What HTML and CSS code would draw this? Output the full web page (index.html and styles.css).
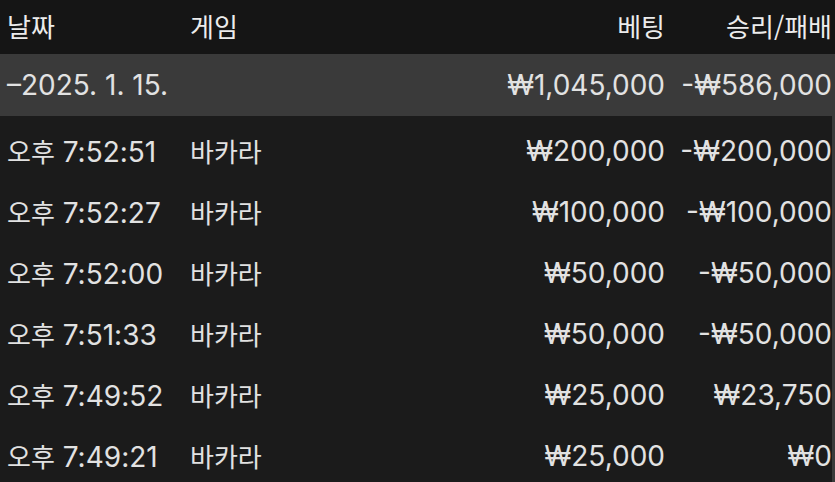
FILE: index.html
```html
<!DOCTYPE html>
<html lang="ko">
<head>
<meta charset="utf-8">
<link rel="stylesheet" href="styles.css">
</head>
<body>
<div class="table">
  <div class="row head">
    <div class="c date"><span class="ko">날짜</span></div>
    <div class="c game"><span class="ko">게임</span></div>
    <div class="c num"><span class="ko">베팅</span></div>
    <div class="c num"><span class="ko">승리/패배</span></div>
  </div>
  <div class="body">
    <div class="row group">
      <div class="c date">–2025. 1. 15.</div>
      <div class="c game"></div>
      <div class="c num">₩1,045,000</div>
      <div class="c num">-₩586,000</div>
    </div>
    <div class="row">
      <div class="c date"><span class="ko">오후</span> 7:52:51</div>
      <div class="c game"><span class="ko">바카라</span></div>
      <div class="c num">₩200,000</div>
      <div class="c num">-₩200,000</div>
    </div>
    <div class="row">
      <div class="c date"><span class="ko">오후</span> 7:52:27</div>
      <div class="c game"><span class="ko">바카라</span></div>
      <div class="c num">₩100,000</div>
      <div class="c num">-₩100,000</div>
    </div>
    <div class="row">
      <div class="c date"><span class="ko">오후</span> 7:52:00</div>
      <div class="c game"><span class="ko">바카라</span></div>
      <div class="c num">₩50,000</div>
      <div class="c num">-₩50,000</div>
    </div>
    <div class="row">
      <div class="c date"><span class="ko">오후</span> 7:51:33</div>
      <div class="c game"><span class="ko">바카라</span></div>
      <div class="c num">₩50,000</div>
      <div class="c num">-₩50,000</div>
    </div>
    <div class="row">
      <div class="c date"><span class="ko">오후</span> 7:49:52</div>
      <div class="c game"><span class="ko">바카라</span></div>
      <div class="c num">₩25,000</div>
      <div class="c num">₩23,750</div>
    </div>
    <div class="row">
      <div class="c date"><span class="ko">오후</span> 7:49:21</div>
      <div class="c game"><span class="ko">바카라</span></div>
      <div class="c num">₩25,000</div>
      <div class="c num">₩0</div>
    </div>
  </div>
</div>
</body>
</html>
```
FILE: styles.css
```css
html, body {
  margin: 0;
  padding: 0;
  background: #1b1b1b;
}
body {
  width: 835px;
  height: 482px;
  overflow: hidden;
  font-family: Inter, "Noto Sans CJK KR", sans-serif;
  font-size: 28px;
  color: #e2e2e2;
}
.ko {
  font-family: "Noto Sans CJK KR", sans-serif;
  font-size: 26px;
}
.table {
  display: flex;
  flex-direction: column;
}
.row {
  box-sizing: border-box;
  display: grid;
  grid-template-columns: 183px 315px 160px 167px;
  padding-left: 7px;
  padding-top: 8px;
  height: 61px;
  align-items: center;
  white-space: nowrap;
}
.head {
  height: 54px;
  padding-top: 0;
  padding-bottom: 4px;
  padding-right: 3px;
  background: #151515;
  color: #ececec;
}
.body {
  border-right: 3px solid #3a3a3a;
}
.group {
  height: 62px;
  padding-top: 0;
  background: #3a3a3a;
}
.num {
  text-align: right;
}
```
